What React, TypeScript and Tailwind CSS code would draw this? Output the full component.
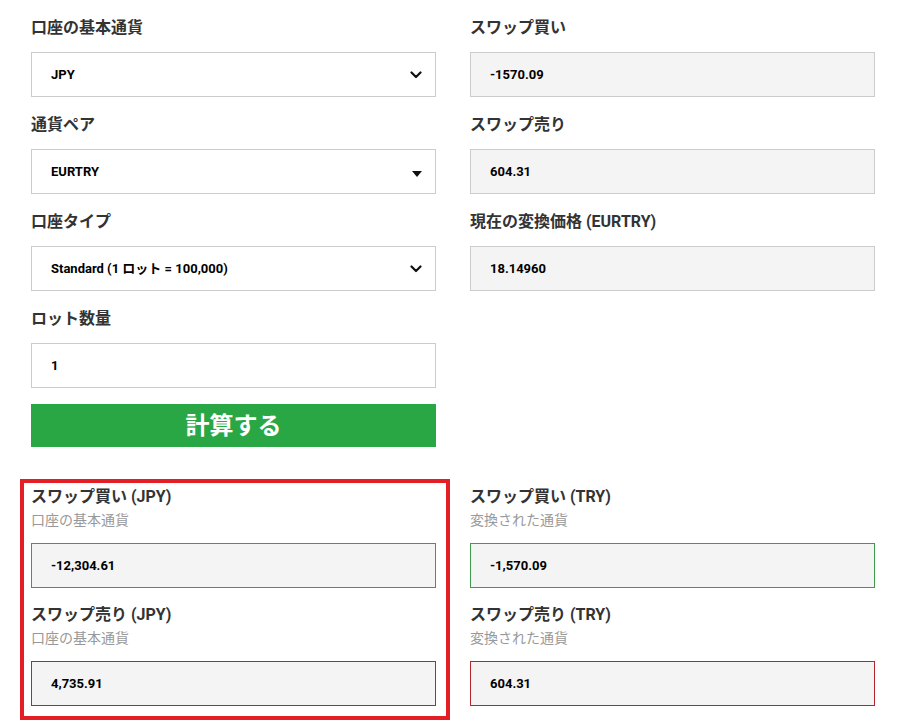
import React from 'react';

const font = { fontFamily: 'Roboto, "Noto Sans CJK JP", sans-serif' };

const Chevron = () => (
    <svg width="12" height="8" viewBox="0 0 12 8" className="absolute right-[13px] top-1/2 -translate-y-1/2">
        <path d="M1.5 1.5 L6 6 L10.5 1.5" fill="none" stroke="#111" strokeWidth="2.2" strokeLinecap="round" strokeLinejoin="round" />
    </svg>
);

const Caret = () => (
    <svg width="10" height="6" viewBox="0 0 10 6" className="absolute right-[13px] top-[21px]">
        <path d="M0 0 L10 0 L5 6 Z" fill="#111" />
    </svg>
);

type BoxProps = {
    value: string;
    readOnly?: boolean;
    tone?: 'green' | 'red';
    icon?: 'chevron' | 'caret';
};

const Box: React.FC<BoxProps> = ({ value, readOnly, tone, icon }) => {
    const border =
        tone === 'green' ? 'border-[#3f9a4d]' : tone === 'red' ? 'border-[#b8262d]' : 'border-[#cccccc]';
    return (
        <div
            className={`relative flex h-[45px] items-center border pl-[19px] text-[13px] font-bold text-black ${border} ${
                readOnly ? 'bg-[#f4f4f4]' : 'bg-white'
            }`}
        >
            {value}
            {icon === 'chevron' && <Chevron />}
            {icon === 'caret' && <Caret />}
        </div>
    );
};

const Field: React.FC<{ label: string } & BoxProps> = ({ label, ...rest }) => (
    <div className="pt-4">
        <div className="mb-3 h-6 text-[16px] leading-6 font-bold text-[#333]">{label}</div>
        <Box {...rest} />
    </div>
);

const Result: React.FC<{ label: string; sub: string; first?: boolean } & BoxProps> = ({ label, sub, first, ...rest }) => (
    <div className={first ? '' : 'mt-4'}>
        <div className="h-[22px] text-[16px] leading-[22px] font-bold text-[#333]">{label}</div>
        <div className="mt-[2px] mb-[13px] h-5 text-[14px] leading-5 text-[#999]">{sub}</div>
        <Box {...rest} />
    </div>
);

export default function App() {
    return (
        <div className="min-h-[728px] w-[897px] bg-white" style={font}>
            <div className="grid grid-cols-[405px_405px] gap-x-[34px] pl-[31px]">
                {/* Left inputs */}
                <div>
                    <Field label="口座の基本通貨" value="JPY" icon="chevron" />
                    <Field label="通貨ペア" value="EURTRY" icon="caret" />
                    <Field label="口座タイプ" value="Standard (1 ロット = 100,000)" icon="chevron" />
                    <Field label="ロット数量" value="1" />
                    <button className="mt-4 flex h-[43px] w-full items-center justify-center bg-[#29a745] text-[24px] font-bold text-white">
                        計算する
                    </button>
                </div>

                {/* Right readonly */}
                <div>
                    <Field label="スワップ買い" value="-1570.09" readOnly />
                    <Field label="スワップ売り" value="604.31" readOnly />
                    <Field label="現在の変換価格 (EURTRY)" value="18.14960" readOnly />
                </div>

                {/* Bottom results */}
                <div className="mt-8 -ml-[11px] w-[430px] border-[4px] border-[#e31e25] pt-[3px] pr-[10px] pb-[10px] pl-[7px]">
                    <Result first label="スワップ買い (JPY)" sub="口座の基本通貨" value="-12,304.61" readOnly tone="green" />
                    <Result label="スワップ売り (JPY)" sub="口座の基本通貨" value="4,735.91" readOnly tone="red" />
                </div>
                <div className="mt-8 pt-[7px]">
                    <Result first label="スワップ買い (TRY)" sub="変換された通貨" value="-1,570.09" readOnly tone="green" />
                    <Result label="スワップ売り (TRY)" sub="変換された通貨" value="604.31" readOnly tone="red" />
                </div>
            </div>
        </div>
    );
}
